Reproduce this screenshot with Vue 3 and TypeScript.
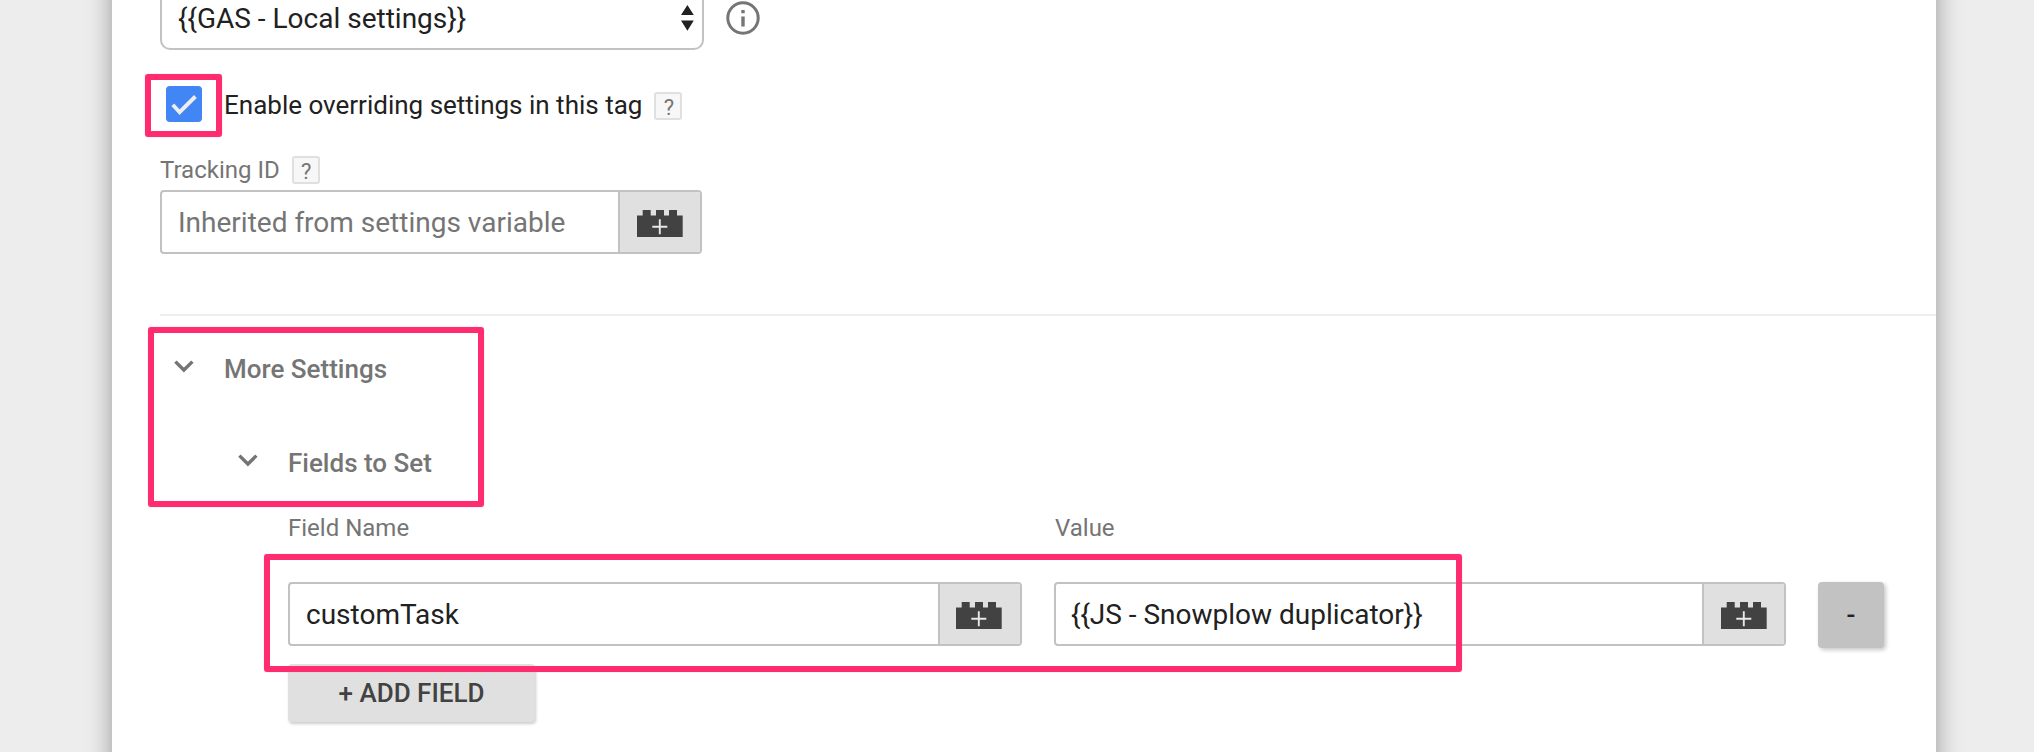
<script setup lang="ts">
import { defineComponent, h, ref } from 'vue'

const BrickIcon = defineComponent({
  name: 'BrickIcon',
  render() {
    return h('svg', { width: 46, height: 28, viewBox: '0 0 46 28', 'aria-hidden': 'true' }, [
      h('path', {
        fill: '#424242',
        d: 'M0 5.4H5.7V0H13.7V5.4H19V0H27V5.4H32V0H40V5.4H45.7V27H0Z',
      }),
      h('path', { stroke: '#e8e8e8', 'stroke-width': 1.9, d: 'M15.3 16.8H30.3M22.8 9.3V24.3' }),
    ])
  },
})

interface FieldRow {
  name: string
  value: string
}

const overriding = ref(true)
const moreOpen = ref(true)
const fieldsOpen = ref(true)
const rows = ref<FieldRow[]>([{ name: 'customTask', value: '{{JS - Snowplow duplicator}}' }])
const settingsVariable = '{{GAS - Local settings}}'

const addField = () => rows.value.push({ name: '', value: '' })
const removeField = (index: number) => rows.value.splice(index, 1)
</script>

<template>
  <div class="page">
    <main class="panel">
      <div class="select-row">
        <div class="select">
          <span>{{ settingsVariable }}</span>
          <svg class="arrows" width="13" height="26" viewBox="0 0 13 26">
            <path d="M6.4 0L12.8 10H0ZM0 15.6H12.8L6.4 25.8Z" fill="#212121" />
          </svg>
        </div>
        <svg class="info" width="34" height="34" viewBox="0 0 34 34">
          <circle cx="17" cy="17" r="15.2" fill="none" stroke="#757575" stroke-width="3" />
          <path d="M15.3 8.9H18.7V12.3H15.3ZM15.3 15.4H18.7V25.4H15.3Z" fill="#757575" />
        </svg>
      </div>

      <div class="override">
        <button class="checkbox" role="checkbox" :aria-checked="overriding" @click="overriding = !overriding">
          <svg v-if="overriding" width="36" height="36" viewBox="0 0 36 36">
            <path d="M6.8 18.8L13.6 26.2L29.4 10.5" fill="none" stroke="#eeeeee" stroke-width="3.9" />
          </svg>
        </button>
        <span class="override-label">Enable overriding settings in this tag</span>
        <span class="help">?</span>
      </div>

      <div class="tracking-label">
        <span class="caption">Tracking ID</span>
        <span class="help">?</span>
      </div>
      <div class="field tracking">
        <div class="field-text placeholder">Inherited from settings variable</div>
        <button class="addon"><BrickIcon /></button>
      </div>

      <section class="more">
        <div class="heading" @click="moreOpen = !moreOpen">
          <svg class="chevron" width="20" height="13" viewBox="0 0 20 13">
            <path d="M1.4 1.6L9.9 10L18.4 1.6" fill="none" stroke="#757575" stroke-width="3.4" />
          </svg>
          <span>More Settings</span>
        </div>
        <div v-if="moreOpen" class="nested">
          <div class="heading" @click="fieldsOpen = !fieldsOpen">
            <svg class="chevron" width="20" height="13" viewBox="0 0 20 13">
              <path d="M1.4 1.6L9.9 10L18.4 1.6" fill="none" stroke="#757575" stroke-width="3.4" />
            </svg>
            <span>Fields to Set</span>
          </div>
          <div v-if="fieldsOpen" class="fields">
            <div class="grid captions">
              <span class="caption">Field Name</span>
              <span class="caption">Value</span>
            </div>
            <div v-for="(row, index) in rows" :key="index" class="grid">
              <div class="field name-field">
                <div class="field-text">{{ row.name }}</div>
                <button class="addon"><BrickIcon /></button>
              </div>
              <div class="field">
                <div class="field-text value">{{ row.value }}</div>
                <button class="addon"><BrickIcon /></button>
              </div>
              <button class="remove" @click="removeField(index)">-</button>
            </div>
            <button class="add" @click="addField">+ ADD FIELD</button>
          </div>
        </div>
      </section>
    </main>

    <div class="mark mark-checkbox"></div>
    <div class="mark mark-headings"></div>
    <div class="mark mark-fields"></div>
  </div>
</template>

<style>
body {
  margin: 0;
  overflow: hidden;
}
</style>

<style scoped>
.page {
  position: relative;
  box-sizing: border-box;
  height: 752px;
  padding: 0 98px 0 112px;
  overflow: hidden;
  background: #ededed;
  color: #212121;
  font-family: Roboto, 'Liberation Sans', sans-serif;
}
.page * {
  box-sizing: border-box;
}
button {
  margin: 0;
  padding: 0;
  border: 0;
  color: inherit;
  font-family: inherit;
}
svg {
  display: block;
}
/* The panel runs past both ends of the page, so its side shadow stays even. */
.panel {
  height: 832px;
  margin-top: -40px;
  padding: 40px 0 0 48px;
  background: #fff;
  box-shadow: 0 0 24px rgba(0, 0, 0, 0.36);
}
.select-row {
  display: flex;
  height: 50px;
}
.select {
  display: flex;
  align-items: flex-start;
  justify-content: space-between;
  width: 544px;
  height: 50px;
  padding: 2px 8px 0 16px;
  border: 2px solid #c2c2c2;
  border-top: 0;
  border-radius: 0 0 10px 10px;
  font-size: 28px;
  line-height: 33px;
}
.arrows {
  margin-top: 3px;
}
.info {
  margin: 1px 0 0 21.5px;
}
.override {
  display: flex;
  align-items: center;
  height: 36px;
  margin-top: 36px;
  padding-left: 6px;
}
.checkbox {
  width: 36px;
  height: 36px;
  border-radius: 4px;
  background: #4285f4;
}
.override-label {
  margin: 2px 12px 0 22px;
  font-size: 26px;
  line-height: 32px;
}
.help {
  width: 28px;
  height: 28px;
  padding-left: 1px;
  border: 2px solid #e0e0e0;
  border-radius: 3px;
  background: #f7f7f7;
  color: #757575;
  font-size: 22px;
  line-height: 27px;
  text-align: center;
}
.override .help {
  margin-top: 4px;
}
.tracking-label {
  display: flex;
  align-items: center;
  gap: 12px;
  height: 28px;
  margin-top: 34px;
}
.caption {
  color: #757575;
  font-size: 24px;
  line-height: 28px;
}
.field {
  display: flex;
  height: 64px;
  border: 2px solid #c2c2c2;
  border-radius: 4px;
  background: #fff;
}
.tracking {
  width: 542px;
  margin-top: 6px;
}
.field-text {
  flex: 1;
  height: 60px;
  padding-left: 16px;
  font-size: 28px;
  line-height: 62px;
  white-space: nowrap;
}
.value {
  padding-left: 15px;
}
.placeholder {
  color: #757575;
}
.addon {
  width: 82px;
  padding: 18px 0 0 17px;
  border-left: 2px solid #c2c2c2;
  background: #e0e0e0;
}
.addon svg {
  margin-bottom: 14px;
}
.name-field .addon {
  padding-left: 16px;
}
.more {
  margin-top: 60px;
  padding: 37px 0 0 14px;
  border-top: 2px solid #eee;
}
.heading {
  display: flex;
  gap: 30px;
  height: 32px;
  color: #757575;
  font-size: 26px;
  font-weight: 500;
  line-height: 32px;
}
.chevron {
  margin-top: 7px;
}
.nested {
  margin-top: 62px;
  padding-left: 64px;
}
.fields {
  padding: 35px 52px 0 50px;
}
.grid {
  display: grid;
  grid-template-columns: 734px 732px 66px;
  column-gap: 32px;
  height: 64px;
}
.captions {
  height: 28px;
  margin-bottom: 40px;
}
.captions .caption + .caption {
  padding-left: 1px;
}
.remove {
  height: 66px;
  border-radius: 4px;
  background: #c2c2c2;
  box-shadow: 2px 2px 4px rgba(0, 0, 0, 0.22);
  color: #212121;
  font-size: 26px;
  font-weight: 500;
  line-height: 66px;
}
.add {
  width: 247px;
  height: 58px;
  margin-top: 18px;
  border-radius: 4px;
  background: #e0e0e0;
  box-shadow: 1px 2px 3px rgba(0, 0, 0, 0.2);
  color: #424242;
  font-size: 26px;
  font-weight: 500;
}
.mark {
  position: absolute;
  border: 6px solid #ff2d6f;
  border-radius: 3px;
  box-shadow: 0 0 1px rgba(255, 45, 111, 0.6);
  pointer-events: none;
}
.mark-checkbox {
  top: 74px;
  left: 145px;
  width: 77px;
  height: 63px;
}
.mark-headings {
  top: 327px;
  left: 148px;
  width: 336px;
  height: 180px;
}
.mark-fields {
  top: 554px;
  left: 264px;
  width: 1198px;
  height: 118px;
}
</style>
